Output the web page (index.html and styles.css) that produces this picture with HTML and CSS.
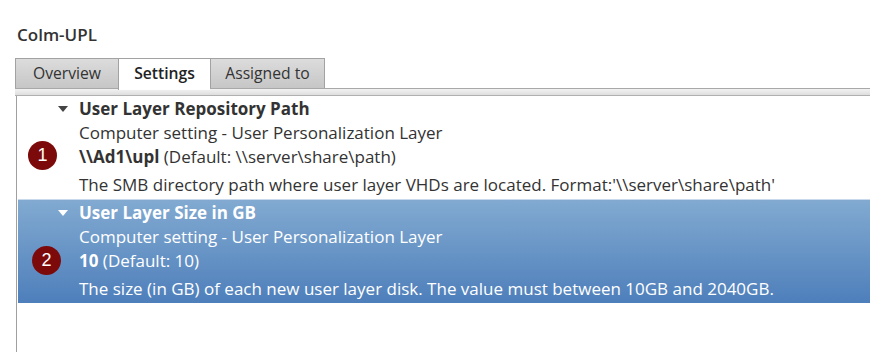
FILE: index.html
```html
<!DOCTYPE html>
<html lang="en">
<head>
  <meta charset="UTF-8">
  <title>Colm-UPL</title>
  <link rel="stylesheet" href="styles.css">
</head>
<body>

  <!-- Title -->
  <div class="title">Colm-UPL</div>

  <!-- Tabs -->
  <div class="tabs">
    <div class="tab">Overview</div>
    <div class="tab active">Settings</div>
    <div class="tab">Assigned to</div>
  </div>
  <div class="tab-strip"></div>

  <!-- Settings list -->
  <div class="panel">
    <div class="section">
      <div class="row heading"><span class="arrow"></span>User Layer Repository Path</div>
      <div class="row sub">Computer setting - User Personalization Layer</div>
      <div class="row sub"><b>\\Ad1\upl</b>&nbsp;(Default: \\server\share\path)</div>
      <div class="row sub desc">The SMB directory path where user layer VHDs are located. Format:'\\server\share\path'</div>
      <span class="badge badge-1">1</span>
    </div>
    <div class="section selected">
      <div class="row heading"><span class="arrow"></span>User Layer Size in GB</div>
      <div class="row sub">Computer setting - User Personalization Layer</div>
      <div class="row sub"><b>10</b>&nbsp;(Default: 10)</div>
      <div class="row sub desc">The size (in GB) of each new user layer disk. The value must between 10GB and 2040GB.</div>
      <span class="badge badge-2">2</span>
    </div>
  </div>

</body>
</html>
```

FILE: styles.css
```css
/* base */
* { margin: 0; padding: 0; box-sizing: border-box; }
body {
  font-family: 'Open Sans', 'Noto Sans', sans-serif;
  font-size: 17px;
  color: #333;
  background: #fff;
  width: 870px;
  height: 352px;
  overflow: hidden;
}

.title {
  padding: 24px 0 0 17px;
  height: 58px;
  font-size: 17px;
  font-weight: 600;
  line-height: 22px;
  color: #333;
}

/* tabs */
.tabs {
  display: flex;
  margin-left: 15px;
  height: 30px;
}
.tab {
  height: 30px;
  line-height: 29px;
  border: 1px solid #a2a2a2;
  border-bottom: none;
  border-right: none;
  background: linear-gradient(#dcdcdc, #c6c6c6);
  color: #333;
  font-size: 15.7px;
  text-align: center;
}
.tab:nth-child(1) { width: 103px; }
.tab:nth-child(2) { width: 92px; }
.tab:nth-child(3) { width: 115px; border-right: 1px solid #a2a2a2; }
.tab.active {
  background: #fff;
  font-weight: 600;
  color: #222;
  position: relative;
  z-index: 1;
  height: 32px;
}
.tab-strip {
  margin-left: 15px;
  height: 8px;
  border-top: 1px solid #a8a8a8;
  border-bottom: 1px solid #b0b0b0;
  background: linear-gradient(#f2f2f2, #dedede);
}

/* panel */
.panel {
  margin-left: 16px;
  border-left: 1px solid #a0a0a0;
  height: 256px;
}
.section {
  position: relative;
  padding: 1px 0 2px 41px;
}
.section.selected {
  margin-left: 1px;
  padding-left: 40px;
  border-top: 1px solid #c9d9ec;
  background: linear-gradient(#82aad1, #4e7fbb);
  color: #fff;
}
.row {
  height: 24px;
  line-height: 24px;
  white-space: nowrap;
}
.row.sub { padding-left: 21px; }
.row.desc { margin-top: 4px; }
.heading {
  display: flex;
  align-items: center;
  font-weight: 700;
}
.arrow {
  width: 0;
  height: 0;
  margin-right: 11px;
  border-left: 5px solid transparent;
  border-right: 5px solid transparent;
  border-top: 6px solid #444;
}
.selected .arrow { border-top-color: #fff; }

/* numbered annotation circles */
.badge {
  position: absolute;
  width: 29px;
  height: 29px;
  border-radius: 50%;
  background: #7d0a0a;
  color: #fff;
  font-family: 'Liberation Sans', Arial, sans-serif;
  font-size: 18px;
  line-height: 29px;
  text-align: center;
}
.badge-1 { left: 11px; top: 45px; }
.badge-2 { left: 14px; top: 46px; }
```
